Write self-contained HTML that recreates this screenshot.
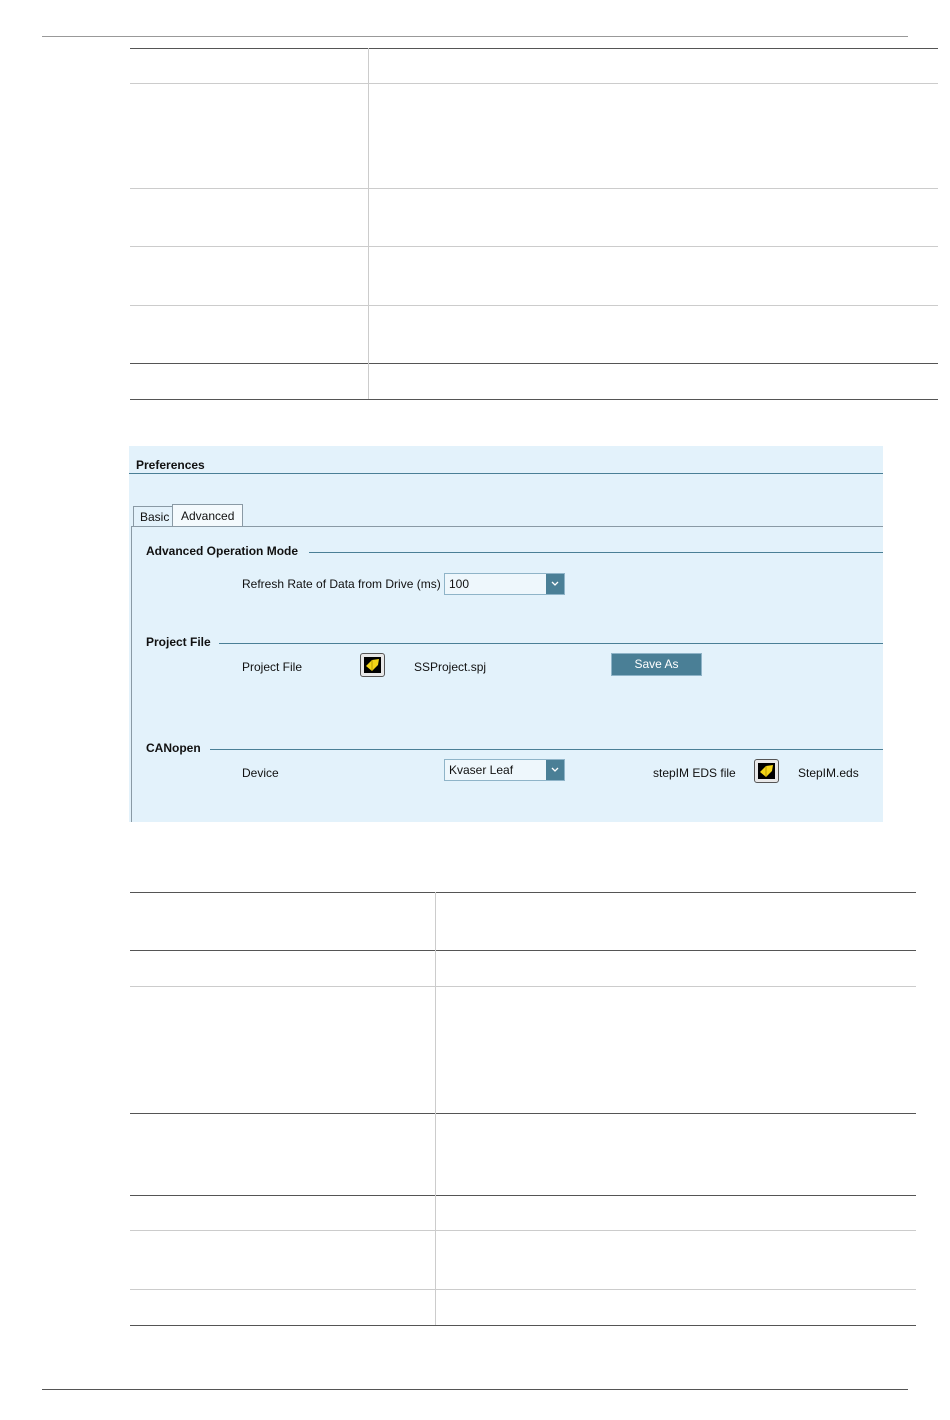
<!DOCTYPE html>
<html><head><style>
body{margin:0;width:950px;height:1420px;background:#fff;position:relative;font-family:"Liberation Sans",sans-serif;overflow:hidden}
.a{position:absolute}
.hd{background:#555;height:1px}
.hl{background:#ccc;height:1px}
.v{background:#ccc;width:1px}
.t{position:absolute;font-size:12px;color:#111;white-space:nowrap}
.b{font-weight:bold}
.ln{position:absolute;height:1px;background:#4a7f96}
.cb{position:absolute;width:121px;height:22px;border:1px solid #8fb4c8;background:#eef7fc;box-sizing:border-box;font-size:12px;line-height:20px;padding-left:4px;color:#111}
.cb i{position:absolute;right:0;top:0;width:18px;height:20px;background:#4a7f96}
.cb svg{position:absolute;left:5px;top:7px}
.fo{position:absolute;width:25px;height:24px;border:1px solid #555;border-radius:3px;background:#e8e8e8;box-sizing:border-box}
.fo div{position:absolute;left:3px;top:3px;width:17px;height:16px;background:#000}
.fo svg{position:absolute;left:3px;top:3px}
</style></head><body>
<div class="a" style="left:42px;top:36px;width:866px;height:1px;background:#999"></div>
<div class="a" style="left:42px;top:1389px;width:866px;height:1px;background:#555"></div>

<div class="a hd" style="left:130px;top:48px;width:808px"></div>
<div class="a hl" style="left:130px;top:83px;width:808px"></div>
<div class="a hl" style="left:130px;top:188px;width:808px"></div>
<div class="a hl" style="left:130px;top:246px;width:808px"></div>
<div class="a hl" style="left:130px;top:305px;width:808px"></div>
<div class="a hd" style="left:130px;top:363px;width:808px"></div>
<div class="a hd" style="left:130px;top:399px;width:808px"></div>
<div class="a v" style="left:368px;top:48px;height:351px"></div>

<div class="a" style="left:129px;top:446px;width:754px;height:376px;background:#e3f2fb"></div>
<div class="t b" style="left:136px;top:458px">Preferences</div>
<div class="ln" style="left:129px;top:473px;width:754px"></div>
<div class="a" style="left:133px;top:506px;width:40px;height:20px;border:1px solid #8a9aa5;border-bottom:none;box-sizing:border-box"></div>
<div class="t" style="left:140px;top:510px">Basic</div>
<div class="a" style="left:172px;top:504px;width:71px;height:23px;border:1px solid #8a9aa5;border-bottom:none;background:#f4fafd;box-sizing:border-box"></div>
<div class="t" style="left:181px;top:509px">Advanced</div>
<div class="a" style="left:131px;top:526px;width:752px;height:1px;background:#8a9aa5"></div>
<div class="a" style="left:131px;top:526px;width:1px;height:296px;background:#8a9aa5"></div>

<div class="t b" style="left:146px;top:544px">Advanced Operation Mode</div>
<div class="ln" style="left:309px;top:552px;width:574px"></div>
<div class="t" style="left:242px;top:577px">Refresh Rate of Data from Drive (ms)</div>
<div class="cb" style="left:444px;top:573px">100<i><svg width="8" height="6"><path d="M1 1 L4 4 L7 1" stroke="#fff" stroke-width="1.3" fill="none"/></svg></i></div>

<div class="t b" style="left:146px;top:635px">Project File</div>
<div class="ln" style="left:219px;top:643px;width:664px"></div>
<div class="t" style="left:242px;top:660px">Project File</div>
<div class="fo" style="left:360px;top:653px"><div></div><svg width="17" height="16"><path d="M2 9 L8 3 L15 2 L14 8 L8 14 Z" fill="#f3d417"/><path d="M8 3 L8 14" stroke="#b89a00" stroke-width="1"/></svg></div>
<div class="t" style="left:414px;top:660px">SSProject.spj</div>
<div class="a" style="left:611px;top:653px;width:91px;height:23px;background:#4a7f96;border:1px solid #8fb4c8;box-sizing:border-box;color:#fff;font-size:12px;text-align:center;line-height:21px">Save As</div>

<div class="t b" style="left:146px;top:741px">CANopen</div>
<div class="ln" style="left:210px;top:749px;width:673px"></div>
<div class="t" style="left:242px;top:766px">Device</div>
<div class="cb" style="left:444px;top:759px">Kvaser Leaf<i><svg width="8" height="6"><path d="M1 1 L4 4 L7 1" stroke="#fff" stroke-width="1.3" fill="none"/></svg></i></div>
<div class="t" style="left:653px;top:766px">stepIM EDS file</div>
<div class="fo" style="left:754px;top:759px"><div></div><svg width="17" height="16"><path d="M2 9 L8 3 L15 2 L14 8 L8 14 Z" fill="#f3d417"/><path d="M8 3 L8 14" stroke="#b89a00" stroke-width="1"/></svg></div>
<div class="t" style="left:798px;top:766px">StepIM.eds</div>

<div class="a hd" style="left:130px;top:892px;width:786px"></div>
<div class="a hd" style="left:130px;top:950px;width:786px"></div>
<div class="a hl" style="left:130px;top:986px;width:786px"></div>
<div class="a hd" style="left:130px;top:1113px;width:786px"></div>
<div class="a hd" style="left:130px;top:1195px;width:786px"></div>
<div class="a hl" style="left:130px;top:1230px;width:786px"></div>
<div class="a hl" style="left:130px;top:1289px;width:786px"></div>
<div class="a hd" style="left:130px;top:1325px;width:786px"></div>
<div class="a v" style="left:435px;top:892px;height:433px"></div>
</body></html>
